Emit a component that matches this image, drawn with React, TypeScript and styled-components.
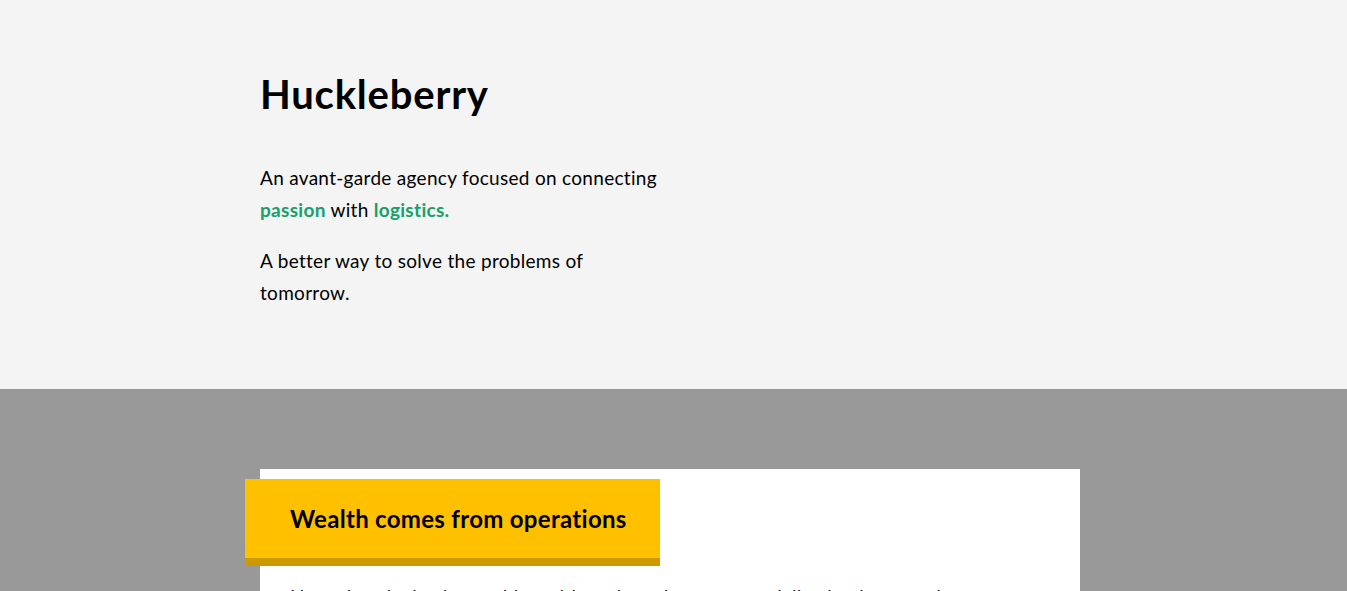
import React from "react";
import styled, { createGlobalStyle } from "styled-components";

const Global = createGlobalStyle`
  html, body { margin: 0; padding: 0; }
  body { font-family: Lato, "Open Sans", sans-serif; color: #000; background: #999; }
  ::-webkit-scrollbar { width: 3px; }
  ::-webkit-scrollbar-track { background: #f1f1f1; }
  ::-webkit-scrollbar-thumb { background: #a8a8a8; }
`;

const Hero = styled.header`
  background: #f4f4f4;
  padding: 70px 0 80px;
`;

const Container = styled.div`
  width: 820px;
  margin: 0 0 0 260px;
`;

const Title = styled.h1`
  margin: 0 0 44px;
  font-size: 40px;
  font-weight: 700;
  line-height: 48px;
  letter-spacing: 0.8px;
`;

const Lead = styled.p`
  margin: 0 0 19px;
  max-width: 410px;
  font-size: 19px;
  line-height: 32px;
  letter-spacing: 0.3px;
  &:last-child { margin-bottom: 0; }
`;

const Accent = styled.strong`
  color: #16a06d;
  font-weight: 700;
`;

const Band = styled.section`
  background: #999;
  padding: 80px 0 120px;
`;

const Card = styled.article`
  background: #fff;
  padding: 10px 30px 60px;
`;

const Banner = styled.div`
  display: inline-block;
  margin-left: -45px;
  background: #ffc000;
  border-bottom: 8px solid #cc9a00;
  padding: 25px 33px 25px 45px;
`;

const BannerTitle = styled.h2`
  margin: 0;
  font-size: 24px;
  font-weight: 700;
  line-height: 29px;
  letter-spacing: 0.3px;
`;

const Body = styled.p`
  margin: 15px 0 0;
  font-size: 19px;
  line-height: 32px;
  letter-spacing: 0.3px;
  color: #111;
`;

export default function App() {
  return (
    <>
      <Global />
      <Hero>
        <Container>
          <Title>Huckleberry</Title>
          <Lead>
            An avant-garde agency focused on connecting <Accent>passion</Accent> with{" "}
            <Accent>logistics.</Accent>
          </Lead>
          <Lead>A better way to solve the problems of tomorrow.</Lead>
        </Container>
      </Hero>
      <Band>
        <Container>
          <Card>
            <Banner>
              <BannerTitle>Wealth comes from operations</BannerTitle>
            </Banner>
            <Body>
              Never lose by having nothing without knowing your specialization in operations, because
              every great business is built on the quiet work of logistics and the people who run them.
            </Body>
          </Card>
        </Container>
      </Band>
    </>
  );
}
